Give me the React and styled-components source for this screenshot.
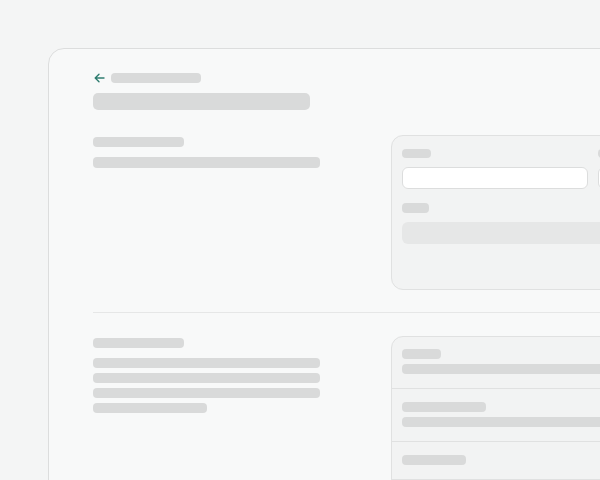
import styled, { createGlobalStyle } from "styled-components";

const GlobalStyle = createGlobalStyle`
  html, body {
    margin: 0;
    padding: 0;
    background: #f4f5f5;
    font-family: "Inter", "Liberation Sans", sans-serif;
    overflow: hidden;
  }
`;

const Page = styled.div`
  padding: 48px 0 0 48px;
  width: 900px;
  height: 480px;
  box-sizing: border-box;
`;

const Card = styled.main`
  background: #f8f9f9;
  border: 1px solid #dcdddd;
  border-radius: 16px;
  padding: 24px 44px 40px;
  width: 860px;
  min-height: 600px;
  box-sizing: border-box;
`;

const Bar = styled.div`
  width: ${(p) => p.$w}px;
  height: ${(p) => p.$h || 10}px;
  background: #d9dada;
  border-radius: 4px;
`;

const BackRow = styled.div`
  display: flex;
  align-items: center;
  gap: 6px;
  height: 10px;
  padding-left: 1px;
`;

const Title = styled(Bar)`
  margin-top: 10px;
  border-radius: 5px;
`;

const Section = styled.section`
  display: grid;
  grid-template-columns: 227px 1fr;
  column-gap: 71px;
  align-items: start;
  margin-top: ${(p) => p.$top}px;
`;

const Intro = styled.div`
  display: flex;
  flex-direction: column;
  gap: 5px;
  padding-top: 2px;

  & > :first-child {
    margin-bottom: 5px;
  }
`;

const Panel = styled.div`
  background: #f2f3f3;
  border: 1px solid #e0e1e1;
  border-radius: 12px;
  width: 404px;
  box-sizing: border-box;
  overflow: hidden;
`;

const FormGrid = styled.div`
  display: grid;
  grid-template-columns: 186px 186px;
  column-gap: 10px;
  padding: 13px 10px 45px;
`;

const Field = styled.div`
  display: flex;
  flex-direction: column;
  gap: 9px;
  grid-column: ${(p) => (p.$wide ? "1 / -1" : "auto")};
  margin-top: ${(p) => (p.$wide ? 14 : 0)}px;
`;

const Input = styled.div`
  height: 22px;
  background: #ffffff;
  border: 1px solid #dcdddd;
  border-radius: 6px;
  box-sizing: border-box;
`;

const Block = styled.div`
  height: 22px;
  background: #e6e7e7;
  border-radius: 6px;
`;

const Divider = styled.hr`
  border: 0;
  border-top: 1px solid #e6e7e7;
  margin: 22px 0 0;
`;

const Row = styled.div`
  display: flex;
  flex-direction: column;
  gap: 5px;
  padding: 13px 10px 14px;
  border-bottom: 1px solid #e0e1e1;

  &:first-child {
    padding-top: 12px;
  }
`;

const Line = styled(Bar)`
  width: 100%;
`;

const BackArrow = () => (
  <svg width="11" height="10" viewBox="0 0 11 10" fill="none">
    <path
      d="M10 5H1.5M5 1.2L1.2 5L5 8.8"
      stroke="#2f7d70"
      strokeWidth="1.4"
      strokeLinecap="round"
      strokeLinejoin="round"
    />
  </svg>
);

const rows = [
  { label: 39, line: true },
  { label: 84, line: true },
  { label: 64, line: false },
  { label: 52, line: true },
];

export default function App() {
  return (
    <>
      <GlobalStyle />
      <Page>
        <Card>
          <BackRow>
            <BackArrow />
            <Bar $w={90} />
          </BackRow>
          <Title $w={217} $h={17} />

          <Section $top={25}>
            <Intro>
              <Bar $w={91} />
              <Bar $w={227} $h={11} />
            </Intro>
            <Panel>
              <FormGrid>
                <Field>
                  <Bar $w={29} $h={9} />
                  <Input />
                </Field>
                <Field>
                  <Bar $w={29} $h={9} />
                  <Input />
                </Field>
                <Field $wide>
                  <Bar $w={27} $h={10} />
                  <Block />
                </Field>
              </FormGrid>
            </Panel>
          </Section>

          <Divider />

          <Section $top={23}>
            <Intro>
              <Bar $w={91} />
              <Bar $w={227} />
              <Bar $w={227} />
              <Bar $w={227} />
              <Bar $w={114} />
            </Intro>
            <Panel>
              {rows.map((r, i) => (
                <Row key={i}>
                  <Bar $w={r.label} />
                  {r.line && <Line />}
                </Row>
              ))}
            </Panel>
          </Section>
        </Card>
      </Page>
    </>
  );
}
